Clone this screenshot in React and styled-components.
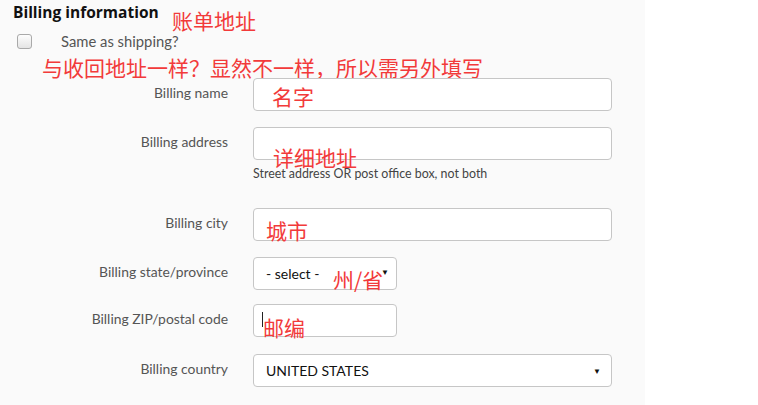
import React from "react";
import styled, { createGlobalStyle } from "styled-components";

const GlobalStyle = createGlobalStyle`
    html, body {
        margin: 0;
        padding: 0;
        background: #ffffff;
    }
    * {
        box-sizing: border-box;
    }
`;

const Page = styled.div`
    display: flex;
    width: 758px;
    height: 405px;
    overflow: hidden;
`;

const Panel = styled.section`
    position: relative;
    width: 645px;
    height: 405px;
    background-color: #fafafa;
    font-family: Lato, "Open Sans", sans-serif;
`;

const Title = styled.h3`
    margin: 0;
    padding: 1px 0 0 13px;
    height: 24px;
    font-family: "Open Sans", sans-serif;
    font-weight: 700;
    font-size: 15.5px;
    line-height: 22px;
    color: #111;
`;

const CheckRow = styled.label`
    display: flex;
    align-items: center;
    height: 20px;
    margin-top: 7px;
    padding-left: 17px;
    font-size: 14.8px;
    color: #555;
`;

const Box = styled.input`
    appearance: none;
    margin: 0 29px 0 0;
    width: 15px;
    height: 15px;
    border: 1px solid #a9a9a9;
    border-radius: 3px;
    background: linear-gradient(#fdfdfd, #e4e4e4);
`;

const Form = styled.div`
    display: grid;
    grid-template-columns: 228px 359px;
    column-gap: 25px;
    margin-top: 27px;
`;

const Label = styled.div`
    text-align: right;
    font-size: 13.9px;
    color: #555;
    line-height: 16px;
    padding-top: 7px;
    margin-bottom: ${(p) => p.$gap}px;
`;

const Field = styled.div`
    position: relative;
    margin-bottom: ${(p) => p.$gap}px;
`;

const Input = styled.div`
    width: ${(p) => p.$w || 359}px;
    height: 33px;
    background: #fff;
    border: 1px solid #c6c6c6;
    border-radius: 4px;
`;

const Select = styled(Input)`
    display: flex;
    align-items: center;
    justify-content: space-between;
    padding: 0 ${(p) => p.$right || 10}px 0 12px;
    font-size: 14px;
    color: #111;
`;

const Arrow = styled.span`
    font-size: 8px;
    color: #111;
    margin-top: ${(p) => p.$top || 0}px;
`;

const Help = styled.div`
    margin-top: 6px;
    font-size: 12.4px;
    color: #444;
    line-height: 16px;
`;

const Cursor = styled.span`
    position: absolute;
    left: 9px;
    top: 8px;
    width: 1px;
    height: 15px;
    background: #222;
`;

const Note = styled.span`
    position: absolute;
    left: ${(p) => p.$left}px;
    top: ${(p) => p.$top}px;
    font-family: "Noto Sans CJK SC", sans-serif;
    font-size: 21px;
    line-height: 21px;
    color: #f23a3a;
    white-space: nowrap;
    pointer-events: none;
`;

export default function App() {
    return (
        <Page>
            <GlobalStyle />
            <Panel>
                <Title>Billing information</Title>
                <Note $left={172} $top={10}>账单地址</Note>
                <CheckRow>
                    <Box type="checkbox" />
                    Same as shipping?
                </CheckRow>
                <Note $left={42} $top={57}>
                    与收回地址一样？显然不一样，所以需另外填写
                </Note>

                <Form>
                    <Label $gap={16}>Billing name</Label>
                    <Field $gap={16}>
                        <Input />
                        <Note $left={19} $top={8}>名字</Note>
                    </Field>

                    <Label $gap={0}>Billing address</Label>
                    <Field $gap={26}>
                        <Input />
                        <Help>Street address OR post office box, not both</Help>
                        <Note $left={20} $top={20}>详细地址</Note>
                    </Field>

                    <Label $gap={16}>Billing city</Label>
                    <Field $gap={16}>
                        <Input />
                        <Note $left={13} $top={12}>城市</Note>
                    </Field>

                    <Label $gap={14}>Billing state/province</Label>
                    <Field $gap={14}>
                        <Select $w={144} $right={7}>
                            <span>- select -</span>
                            <Arrow $top={-4}>▼</Arrow>
                        </Select>
                        <Note $left={80} $top={12}>州/省</Note>
                    </Field>

                    <Label $gap={17}>Billing ZIP/postal code</Label>
                    <Field $gap={17}>
                        <Input $w={144} />
                        <Cursor />
                        <Note $left={10} $top={13}>邮编</Note>
                    </Field>

                    <Label $gap={0}>Billing country</Label>
                    <Field $gap={0}>
                        <Select $w={359} $right={10}>
                            <span>UNITED STATES</span>
                            <Arrow>▼</Arrow>
                        </Select>
                    </Field>
                </Form>
            </Panel>
        </Page>
    );
}
